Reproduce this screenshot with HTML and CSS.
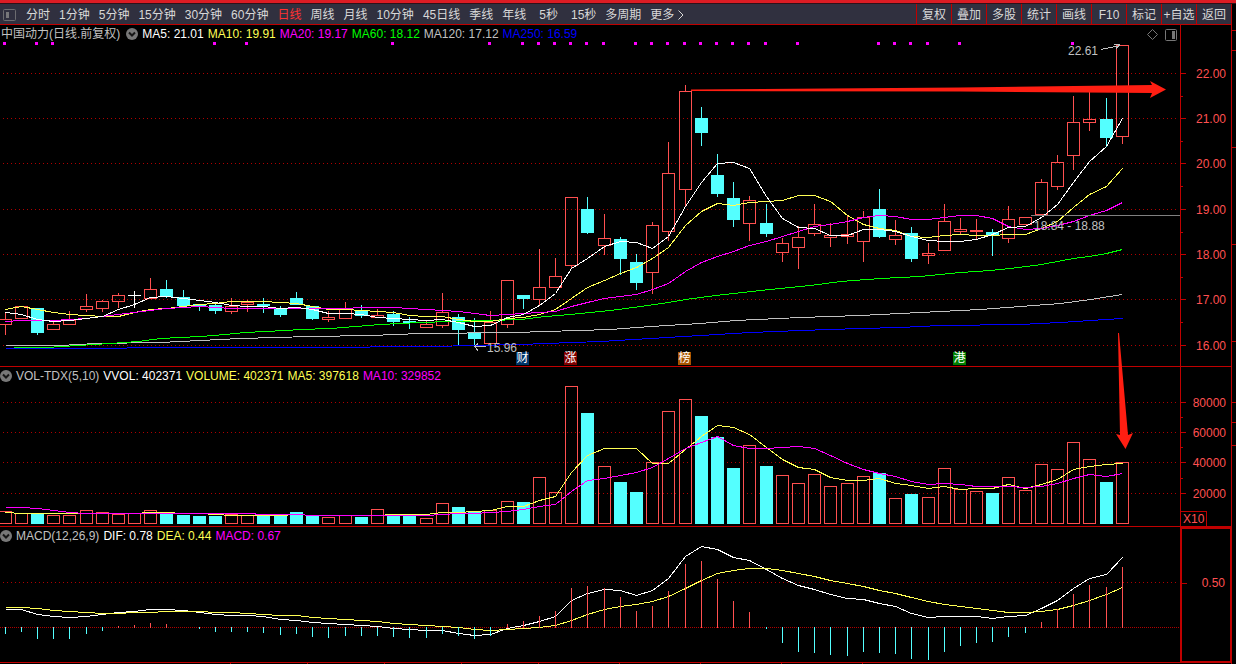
FILE: index.html
```html
<!DOCTYPE html>
<html lang="zh-CN">
<head>
<meta charset="utf-8">
<title>中国动力 日线</title>
<link rel="stylesheet" href="styles.css">
</head>
<body>
<div class="titlebar"></div>
<div class="window">
  <main class="workspace">
    <nav class="toolbar">
      <div class="periods">
        <button class="tool icon-tool" aria-label="侧栏">
          <svg width="13" height="12" viewBox="0 0 13 12"><rect x=".5" y=".5" width="12" height="11" rx="1" fill="none" stroke="#6c6c70"/><rect x="3" y="3" width="3" height="6" fill="#77777a"/></svg>
        </button>
        <button class="tool">分时</button>
        <button class="tool">1分钟</button>
        <button class="tool">5分钟</button>
        <button class="tool">15分钟</button>
        <button class="tool">30分钟</button>
        <button class="tool">60分钟</button>
        <button class="tool active">日线</button>
        <button class="tool">周线</button>
        <button class="tool">月线</button>
        <button class="tool">10分钟</button>
        <button class="tool">45日线</button>
        <button class="tool">季线</button>
        <button class="tool">年线</button>
        <button class="tool seconds">5秒</button>
        <button class="tool seconds">15秒</button>
        <button class="tool">多周期</button>
        <button class="tool more">更多
          <svg width="6" height="10" viewBox="0 0 6 10"><path d="M.5 .5L5 5L.5 9.5" fill="none" stroke="#d8d8d8"/></svg>
        </button>
      </div>
      <div class="actions">
        <button class="action">复权</button>
        <button class="action">叠加</button>
        <button class="action">多股</button>
        <button class="action">统计</button>
        <button class="action">画线</button>
        <button class="action">F10</button>
        <button class="action">标记</button>
        <button class="action">+自选</button>
        <button class="action">返回</button>
      </div>
    </nav>
    <div class="panels">
      <section class="plot" id="price">
        <svg class="canvas" viewBox="0 25 1180 341" preserveAspectRatio="none"></svg>
        <div class="legend">
          <span class="name">中国动力(日线.前复权)</span>
          <button class="fold" aria-label="展开"><svg width="12" height="12" viewBox="0 0 12 12"><circle cx="6" cy="6" r="6" fill="#787878"/><path d="M3 4.5L6 7.5L9 4.5" fill="none" stroke="#151515" stroke-width="2"/></svg></button>
          <span class="white">MA5: 21.01</span>
          <span class="yellow">MA10: 19.91</span>
          <span class="magenta">MA20: 19.17</span>
          <span class="green">MA60: 18.12</span>
          <span class="gray">MA120: 17.12</span>
          <span class="blue">MA250: 16.59</span>
        </div>
        <div class="corner">
          <svg width="11" height="11" viewBox="0 0 11 11"><path d="M5.5 .5L10.5 5.5L5.5 10.5L.5 5.5Z" fill="none" stroke="#777"/></svg>
          <svg width="12" height="12" viewBox="0 0 12 12"><rect x=".5" y=".5" width="11" height="11" rx="1" fill="none" stroke="#777"/><rect x="7" y="2" width="3" height="8" fill="#777"/></svg>
        </div>
      </section>
      <aside class="axis" id="price-axis"><svg class="canvas" viewBox="1181 25 50 341" preserveAspectRatio="none"></svg></aside>

      <section class="plot" id="volume">
        <svg class="canvas" viewBox="0 367 1180 159" preserveAspectRatio="none"></svg>
        <div class="legend">
          <button class="fold" aria-label="展开"><svg width="12" height="12" viewBox="0 0 12 12"><circle cx="6" cy="6" r="6" fill="#787878"/><path d="M3 4.5L6 7.5L9 4.5" fill="none" stroke="#151515" stroke-width="2"/></svg></button>
          <span class="name">VOL-TDX(5,10)</span>
          <span class="white">VVOL: 402371</span>
          <span class="yellow">VOLUME: 402371</span>
          <span class="yellow">MA5: 397618</span>
          <span class="magenta">MA10: 329852</span>
        </div>
      </section>
      <aside class="axis" id="volume-axis"><svg class="canvas" viewBox="1181 367 50 159" preserveAspectRatio="none"></svg><span class="unit">X10</span></aside>

      <section class="plot" id="macd">
        <svg class="canvas" viewBox="0 527 1180 135" preserveAspectRatio="none"></svg>
        <div class="legend">
          <button class="fold" aria-label="展开"><svg width="12" height="12" viewBox="0 0 12 12"><circle cx="6" cy="6" r="6" fill="#787878"/><path d="M3 4.5L6 7.5L9 4.5" fill="none" stroke="#151515" stroke-width="2"/></svg></button>
          <span class="name">MACD(12,26,9)</span>
          <span class="white">DIF: 0.78</span>
          <span class="yellow">DEA: 0.44</span>
          <span class="magenta">MACD: 0.67</span>
        </div>
      </section>
      <aside class="axis framed" id="macd-axis"><svg class="canvas" viewBox="1181 527 50 135" preserveAspectRatio="none"></svg></aside>

      <svg class="drawings" viewBox="0 25 1231 638" preserveAspectRatio="none">
        <polygon points="691,89.5 960,87.5 1152,85 1150,81 1166,89.5 1150,98 1152,93 960,91.5 691,91"/>
        <polygon points="1118,333 1119,333 1128,435 1133,433 1125.5,449 1116,434 1120,435"/>
      </svg>
    </div>
    <svg class="timeline" viewBox="0 0 1231 1" preserveAspectRatio="none"><path d="M230 .5h1M307 .5h1M384 .5h1M461 .5h1M538 .5h1M619 .5h1M700 .5h1M781 .5h1M862 .5h1"/></svg>
  </main>
  <svg class="gutter" viewBox="0 4 4 660" preserveAspectRatio="none"><path d="M0 30.5h4M0 50.5h4M0 147.5h4M0 244.5h4M0 341.5h4M0 402.5h4M0 422.5h4M0 445.5h4"/></svg>
</div>
<script src="chart.js"></script>
</body>
</html>
```
FILE: styles.css
```css
* { box-sizing: border-box; }

body {
  margin: 0;
  height: 100vh;
  display: flex;
  flex-direction: column;
  overflow: hidden;
  background: #000;
  color: #c0c0c0;
  font: 12px/16px "Liberation Sans", "Noto Sans CJK SC", sans-serif;
}

button {
  margin: 0;
  padding: 0;
  border: 0;
  background: none;
  color: inherit;
  font: inherit;
  white-space: nowrap;
}

svg { display: block; }

.titlebar {
  flex: none;
  height: 4px;
  background: #dc1c24;
  border-bottom: 1px solid #301018;
}

.window { flex: 1; min-height: 0; display: flex; }

.workspace {
  flex: 1;
  min-width: 0;
  display: flex;
  flex-direction: column;
  border-right: 1px solid #c00000;
}

.gutter { flex: none; width: 4px; height: 100%; stroke: #c00000; }

.toolbar {
  flex: none;
  display: flex;
  justify-content: space-between;
  height: 21px;
  background: #30303f;
  border-bottom: 1px solid #c00000;
  color: #d8d8d8;
}

.periods { display: flex; align-items: center; gap: 9px; padding: 2px 0 0 3px; }
.tool { display: flex; align-items: center; gap: 4px; }
.icon-tool { margin-right: 1px; }
.seconds { margin-left: 4px; }
.active { color: #ff3232; }
.actions { display: flex; }

.action {
  width: 35px;
  padding-top: 2px;
  border-left: 1px solid #c00000;
}

.panels {
  flex: 1;
  min-height: 0;
  position: relative;
  display: grid;
  grid-template-columns: minmax(0, 1fr) 51px;
  grid-template-rows: 342fr 160fr 136fr;
}

.plot, .axis {
  position: relative;
  min-height: 0;
  border-bottom: 1px solid #c00000;
}

.axis { border-left: 1px solid #c00000; color: #ff5050; }
.framed { border: 2px solid #c00000; border-right-width: 1px; }

.canvas {
  position: absolute;
  inset: 0;
  width: 100%;
  height: 100%;
  shape-rendering: crispEdges;
  overflow: hidden;
}

.legend {
  position: relative;
  display: flex;
  align-items: center;
  gap: 4px;
  height: 18px;
  white-space: nowrap;
}

#price .legend { padding-left: 1px; }
#price .fold { margin: 0 0 0 2px; }

.corner {
  position: absolute;
  top: 4px;
  right: 3px;
  display: flex;
  gap: 7px;
}

.white { color: #fff; }
.yellow { color: #ffff54; }
.magenta { color: #f0f; }
.green { color: #0f0; }
.gray { color: #c0c0c0; }
.blue { color: #00f; }

.mark { position: absolute; white-space: nowrap; transform: translateY(-50%); }
.scale { position: absolute; right: 5px; transform: translateY(-50%); }

.tag {
  position: absolute;
  width: 13px;
  height: 13px;
  color: #fff;
  line-height: 13px;
  text-align: center;
}

.navy { background: #003468; }
.maroon { background: #800000; }
.amber { background: #a85400; }
.forest { background: #008000; }

.unit {
  position: absolute;
  left: 0;
  bottom: 0;
  width: 26px;
  padding-left: 2px;
  line-height: 14px;
  border: 1px solid #c00000;
  border-width: 1px 1px 0 0;
}

.drawings {
  position: absolute;
  inset: 0;
  width: 100%;
  height: 100%;
  fill: #ff1e12;
  pointer-events: none;
}

.timeline { flex: none; width: 100%; height: 1px; stroke: #c00000; }

.grid { stroke: #b00000; fill: none; }
.dotted { stroke-dasharray: 1 3; }
.dense { stroke-dasharray: 1 1; }
.tick { stroke: #c00000; fill: none; }
.rise { stroke: #ff5050; fill: none; }
.fall { stroke: #54ffff; fill: #54ffff; }
.flat { stroke: #fff; fill: none; }
.signal { fill: #f0f; }
.pointer { stroke: #c0c0c0; fill: none; }
.level { stroke: #808080; fill: none; }
.line { fill: none; stroke: currentColor; }
```
FILE: chart.js
```js
const NS = "http://www.w3.org/2000/svg";

const xs = [5,21,37,53,69,86,102,118,134,150,166,183,199,215,231,247,263,280,296,312,328,345,361,377,393,
  409,426,442,458,474,490,507,523,539,555,571,587,604,620,636,652,668,685,701,717,733,749,766,782,798,814,
  830,847,863,879,895,911,928,944,960,976,992,1008,1025,1041,1057,1073,1089,1106,1122];

// high, body top, body bottom, low, direction
const candles = [
  [312,319,324,334,"u"],[306,306,318,318,"u"],[308,308,332,334,"d"],[320,324,329,329,"u"],[311,320,324,324,"u"],
  [294,306,309,311,"u"],[300,301,308,311,"u"],[293,295,301,307,"u"],[291,295,295,307,"f"],[278,289,298,298,"u"],
  [280,289,296,297,"d"],[290,297,305,306,"d"],[304,304,305,310,"d"],[303,305,310,313,"d"],[298,306,311,313,"u"],
  [300,302,304,311,"u"],[298,304,305,312,"d"],[306,309,314,316,"d"],[292,298,304,304,"d"],[306,306,318,319,"d"],
  [311,317,319,321,"u"],[302,309,318,318,"u"],[305,310,315,317,"d"],[309,315,317,317,"u"],[311,314,321,325,"d"],
  [317,321,322,328,"d"],[320,324,327,327,"u"],[293,312,325,327,"u"],[314,317,329,345,"d"],[318,332,338,345,"d"],
  [311,322,343,343,"u"],[280,280,324,327,"u"],[295,295,298,308,"d"],[249,287,299,304,"u"],[258,276,287,287,"u"],
  [197,197,265,267,"u"],[197,209,232,233,"d"],[214,238,245,254,"u"],[237,239,258,274,"d"],[254,262,282,289,"d"],
  [222,225,272,293,"u"],[142,173,231,240,"u"],[85,91,189,205,"u"],[107,118,132,145,"d"],[154,175,193,196,"d"],
  [182,198,219,226,"d"],[196,200,223,240,"u"],[204,223,233,236,"d"],[238,243,252,261,"u"],[226,237,247,268,"u"],
  [204,224,233,235,"u"],[223,235,237,246,"u"],[215,234,236,243,"u"],[211,217,241,261,"u"],[189,209,236,237,"d"],
  [220,235,239,244,"u"],[227,233,258,261,"d"],[243,253,255,263,"u"],[204,221,250,250,"u"],[218,229,231,234,"u"],
  [219,230,231,239,"u"],[229,232,235,255,"d"],[206,219,238,242,"u"],[217,217,224,224,"u"],[179,182,214,214,"u"],
  [155,162,186,189,"u"],[96,122,155,169,"u"],[92,119,122,130,"u"],[98,119,137,146,"d"],[45,45,136,143,"u"]
];

const ma5 = [312,314,319,321,320,318,316,309,304,297,296,298,300,302,305,306,306,308,307,309,313,313,314,317,318,
  319,320,319,322,326,325,317,314,305,293,268,258,246,241,242,248,236,206,182,163,162,168,196,218,227,228,235,
  235,229,229,231,236,240,241,241,239,234,227,226,217,204,182,161,146,118];
const ma10 = [309,306,309,312,314,315,316,316,312,309,308,306,304,303,301,301,301,302,303,306,309,309,310,311,312,
  315,316,316,319,321,321,318,317,314,309,298,287,280,273,267,258,247,225,211,203,205,202,201,200,195,195,201,
  215,224,228,230,236,237,235,234,235,235,234,234,228,221,207,194,186,168];
const ma20 = [321,320,320,320,319,318,316,314,312,310,308,307,306,307,308,308,308,308,308,308,308,308,307,307,307,
  308,309,310,311,313,315,314,313,312,311,306,302,298,296,294,289,283,271,262,256,251,245,241,236,231,226,224,
  221,217,215,216,219,219,217,215,215,218,226,229,228,225,221,215,210,202];
const ma60 = [[13,347],[45,347],[62,346],[78,345],[110,343],[138,341],[160,338],[200,336],[225,334],[245,332],
  [285,330],[300,329],[330,328],[355,326],[380,324],[420,322],[450,321],[490,320],[520,319],[545,316],[570,314],
  [610,310],[640,306],[668,302],[685,299],[715,295],[760,290],[810,285],[840,281],[880,278],[920,276],[960,272],
  [990,270],[1010,268],[1041,264],[1073,258],[1089,256],[1106,253],[1122,249]];
const ma120 = [[5,345],[60,345],[95,343],[160,342],[200,340],[240,338],[275,337],[310,336],[370,335],[420,333],
  [515,332],[545,331],[610,329],[650,326],[700,323],[735,320],[800,317],[860,315],[900,313],[980,309],[1020,306],
  [1060,303],[1090,299],[1122,294]];
const ma250 = [[5,348],[125,348],[128,347],[310,347],[430,346],[520,344],[545,343],[600,341],[650,338],[700,335],
  [750,332],[800,330],[860,328],[900,327],[940,325],[1020,324],[1060,322],[1090,320],[1122,318]];

const volumes = [511,513,513,515,515,510,512,514,513,510,513,515,516,516,514,515,515,516,512,516,517,515,517,509,
  514,515,518,503,507,511,510,501,502,477,492,386,413,466,482,492,462,411,399,416,437,468,445,466,475,483,474,
  486,483,476,473,498,494,497,468,489,491,493,477,490,464,469,442,459,482,462];
const vol5 = [512,513,513,513,513,513,513,513,513,512,512,513,513,514,515,515,515,515,514,515,515,515,515,515,514,
  514,514,512,512,511,510,506,506,500,496,472,455,448,448,448,463,463,449,436,425,427,434,447,459,467,469,477,
  480,480,478,483,485,488,486,489,488,488,484,488,484,479,469,466,464,463];
const vol10 = [507,507,508,510,512,513,513,513,513,513,513,513,513,513,513,513,514,514,514,515,515,515,515,515,515,
  515,515,514,513,513,512,511,509,506,504,491,480,478,475,472,467,458,448,442,436,445,448,448,447,446,448,455,
  463,469,473,476,481,484,483,484,486,486,486,487,486,483,478,474,476,473];

const dif = [609,609,614,616,617,616,614,612,611,609,609,610,612,614,615,615,616,619,620,622,623,624,625,626,628,
  629,630,630,633,635,634,628,625,621,616,600,593,589,590,595,590,578,556,546,549,557,560,569,578,585,589,594,
  598,599,603,606,613,617,616,616,616,618,616,615,608,600,588,578,574,557];
const dea = [607,607,608,610,611,612,613,613,612,612,611,611,611,612,612,613,614,615,615,617,618,619,620,621,623,
  624,625,626,627,629,630,629,628,627,625,620,614,609,606,604,601,596,588,580,573,570,568,568,570,573,576,580,
  583,586,590,593,597,601,604,606,608,610,612,612,611,609,605,600,594,587];
const hist = [633,631,638,638,638,633,630,626,625,623,624,627,628,631,631,631,632,634,633,636,637,635,635,635,636,
  637,637,633,635,638,635,624,621,616,611,588,586,588,597,611,606,591,564,561,579,601,612,628,642,651,652,654,
  655,651,652,653,658,659,651,645,642,641,636,632,622,609,594,585,587,567];

const signals = [0,2,3,13,15,24,30,32,33,34,35,36,37,39,40,41,42,43,44,45,46,47,49,54,55,56,57,59,66];

function add(svg, tag, attrs) {
  const el = document.createElementNS(NS, tag);
  for (const key in attrs) el.setAttribute(key, attrs[key]);
  svg.append(el);
  return el;
}

const canvasOf = id => document.querySelector("#" + id + " .canvas");
const stroke = (svg, cls, d) => add(svg, "path", { class: cls, d });

function line(svg, color, points) {
  add(svg, "polyline", { class: "line " + color, points: points.map(([x, y]) => `${x + 0.5},${y + 0.5}`).join(" ") });
}

const series = ys => ys.map((y, i) => [xs[i], y]);

function grid(svg, ys) {
  for (const y of ys) stroke(svg, "grid dotted", `M3 ${y + 0.5}H1177`);
}

function place(id, text, cls, x, y, box) {
  const el = document.createElement("span");
  el.className = cls;
  el.textContent = text;
  if (x !== null) el.style.left = (x / box.width * 100) + "%";
  el.style.top = ((y - box.top) / box.height * 100) + "%";
  document.getElementById(id).append(el);
}

function bar(svg, kind, x, top, bottom) {
  const cls = kind === "d" ? "fall" : "rise";
  add(svg, "rect", { class: cls, x: x - 5.5, y: top + 0.5, width: 12, height: Math.max(bottom - top, 1) });
}

const priceBox = { width: 1180, top: 25, height: 341 };
const volumeBox = { width: 1180, top: 367, height: 159 };
const macdBox = { width: 1180, top: 529, height: 132 };

const price = canvasOf("price");
grid(price, [73, 118, 163, 209, 254, 299, 345]);
for (const i of signals) add(price, "rect", { class: "signal", x: xs[i] - 2, y: 42, width: 3, height: 3 });
candles.forEach(([high, top, bottom, low, kind], i) => {
  const x = xs[i];
  if (kind === "f") {
    stroke(price, "flat", `M${x + 0.5} ${high}V${low + 1}M${x - 6} ${top + 0.5}h13`);
    return;
  }
  const cls = kind === "d" ? "fall" : "rise";
  if (high < top) stroke(price, cls, `M${x + 0.5} ${high}V${top}`);
  if (low > bottom) stroke(price, cls, `M${x + 0.5} ${bottom + 1}V${low + 1}`);
  bar(price, kind, x, top, bottom);
});
line(price, "blue", ma250);
line(price, "gray", ma120);
line(price, "green", ma60);
line(price, "yellow", series(ma10));
line(price, "magenta", series(ma20));
line(price, "white", series(ma5));
stroke(price, "level", "M1031 215.5H1180");
stroke(price, "pointer", "M1101 49.5L1120 45.5M1114 44.5H1120M1120 45.5L1116 48.5");
stroke(price, "pointer", "M474 346.5H486M478 343.5L474.5 346.5L478 350.5");
place("price", "22.61", "mark gray", 1068, 51, priceBox);
place("price", "15.96", "mark gray", 487, 348, priceBox);
place("price", "18.84 - 18.88", "mark gray", 1034, 226, priceBox);
place("price", "财", "tag navy", 516, 352, priceBox);
place("price", "涨", "tag maroon", 564, 352, priceBox);
place("price", "榜", "tag amber", 678, 352, priceBox);
place("price", "港", "tag forest", 953, 352, priceBox);

const volume = canvasOf("volume");
grid(volume, [402, 432, 462, 493]);
volumes.forEach((top, i) => bar(volume, candles[i][4], xs[i], top, 523));
line(volume, "yellow", series(vol5));
line(volume, "magenta", series(vol10));

const macd = canvasOf("macd");
grid(macd, [582]);
stroke(macd, "grid dense", "M0 627.5H1180");
line(macd, "white", series(dif));
line(macd, "yellow", series(dea));
hist.forEach((y, i) => {
  if (y < 627) stroke(macd, "rise", `M${xs[i] + 0.5} ${y}V628`);
  if (y > 627) stroke(macd, "fall", `M${xs[i] + 0.5} 627V${y + 1}`);
});

function scale(id, labels, majors, minors, box) {
  const svg = canvasOf(id);
  for (const y of majors) stroke(svg, "tick", `M1181 ${y + 0.5}h5`);
  for (const y of minors) stroke(svg, "tick", `M1181 ${y + 0.5}h2`);
  labels.forEach((text, i) => place(id, text, "scale", null, majors[i] + 1, box));
}

scale("price-axis", ["22.00", "21.00", "20.00", "19.00", "18.00", "17.00", "16.00"],
  [73, 118, 163, 209, 254, 299, 345], [96, 141, 186, 232, 277, 322], priceBox);
scale("volume-axis", ["80000", "60000", "40000", "20000"], [402, 432, 462, 493], [417, 447, 478], volumeBox);
scale("macd-axis", ["0.50"], [582], [], macdBox);
```
